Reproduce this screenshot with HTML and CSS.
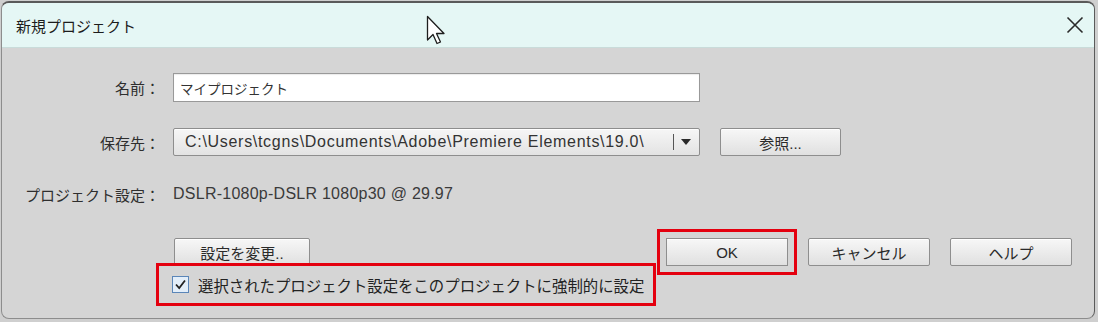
FILE: index.html
```html
<!DOCTYPE html>
<html lang="ja">
<head>
  <meta charset="UTF-8">
  <title>新規プロジェクト</title>
  <link rel="stylesheet" href="styles.css">
</head>
<body>
  <div class="window">
    <div class="titlebar">
      <span class="title">新規プロジェクト</span>
      <svg class="close-icon" width="18" height="18" viewBox="0 0 18 18">
        <path d="M1.5 1.5 L16.5 16.5 M16.5 1.5 L1.5 16.5" stroke="#2b2b2b" stroke-width="1.6" fill="none"/>
      </svg>
      <svg class="cursor" width="20" height="31" viewBox="0 0 20 31">
        <path d="M1.5 1.5 V25 L7 19.5 L11 28.5 L14.5 27 L10.5 18.5 H18 Z" fill="#fff" stroke="#1e1e1e" stroke-width="1.3" stroke-linejoin="round"/>
      </svg>
    </div>

    <div class="content">
      <div class="form-row row-name">
        <label class="field-label" for="name">名前：</label>
        <input class="text-input" id="name" type="text" value="マイプロジェクト">
      </div>

      <div class="form-row row-path">
        <label class="field-label">保存先：</label>
        <div class="path-group">
          <div class="path-select">
            <span class="path-text">C:\Users\tcgns\Documents\Adobe\Premiere Elements\19.0\</span>
            <span class="path-sep"></span>
            <span class="path-arrow"></span>
          </div>
          <button class="btn btn-browse" type="button">参照...</button>
        </div>
      </div>

      <div class="form-row row-setting">
        <span class="field-label">プロジェクト設定：</span>
        <span class="setting-value">DSLR-1080p-DSLR 1080p30 @ 29.97</span>
      </div>

      <div class="actions">
        <button class="btn btn-change" type="button">設定を変更..</button>
        <div class="dialog-buttons">
          <button class="btn btn-ok marked" type="button">OK</button>
          <button class="btn" type="button">キャンセル</button>
          <button class="btn" type="button">ヘルプ</button>
        </div>
      </div>

      <label class="force-row marked">
        <span class="checkbox">
          <svg width="13" height="13" viewBox="0 0 13 13">
            <path d="M2 6.5 L5.2 10 L11 2.5" stroke="#222" stroke-width="1.8" fill="none"/>
          </svg>
        </span>
        <span class="force-text">選択されたプロジェクト設定をこのプロジェクトに強制的に設定</span>
      </label>
    </div>
  </div>
</body>
</html>
```

FILE: styles.css
```css
body {
  margin: 0;
  background: #cfcfcf;
  font-family: "Liberation Sans", "Noto Sans CJK JP", sans-serif;
  color: #2a2a2a;
}

.window {
  box-sizing: border-box;
  width: 1094px;
  height: 318px;
  margin: 1px 0 0 1px;
  background: #d5d5d5;
  border: 1px solid #8d8d8d;
  border-top: 2px solid #5a5a5a;
  border-right-color: #5a5a5a;
  border-radius: 8px;
  overflow: hidden;
}

.titlebar {
  position: relative;
  box-sizing: border-box;
  height: 45px;
  display: flex;
  align-items: center;
  justify-content: space-between;
  padding: 0 10px 0 14px;
  background: #e5f7f5;
  border-bottom: 1px solid #c9dcda;
}

.title {
  font-size: 15px;
  color: #1c1c1c;
}

.cursor {
  position: absolute;
  left: 424px;
  top: 12px;
}

.content {
  padding-top: 25px;
}

.form-row {
  display: grid;
  grid-template-columns: 158px 1fr;
  column-gap: 13px;
  align-items: center;
  height: 28px;
}

.row-name { margin-bottom: 27px; }
.row-path { margin-bottom: 24px; }

.field-label {
  text-align: right;
  font-size: 15px;
  color: #2e2e2e;
}

.text-input {
  box-sizing: border-box;
  width: 527px;
  height: 29px;
  margin: 0;
  padding: 0 6px;
  border: 1px solid #999;
  background: #fff;
  font-family: "Liberation Sans", "Noto Sans CJK JP", sans-serif;
  font-size: 13.5px;
  color: #333;
  box-shadow: inset 0 1px 1px rgba(0, 0, 0, 0.08);
}

.path-group {
  display: flex;
  align-items: center;
  gap: 20px;
}

.path-select {
  box-sizing: border-box;
  width: 527px;
  height: 28px;
  display: flex;
  align-items: center;
  padding-left: 11px;
  border: 1px solid #8e8e8e;
  border-radius: 2px;
  background: linear-gradient(#f6f6f6, #e3e3e3);
  box-shadow: inset 0 1px 0 #fff;
}

.path-text {
  flex: 1;
  font-size: 16px;
  letter-spacing: 0.7px;
  color: #333;
  white-space: nowrap;
}

.path-sep {
  width: 1px;
  height: 16px;
  background: #555;
  margin-right: 7px;
}

.path-arrow {
  width: 0;
  height: 0;
  border-left: 5px solid transparent;
  border-right: 5px solid transparent;
  border-top: 6px solid #2a2a2a;
  margin-right: 8px;
}

.btn {
  box-sizing: border-box;
  width: 122px;
  height: 28px;
  padding: 0;
  border: 1px solid #8e8e8e;
  border-radius: 2px;
  background: linear-gradient(#f7f7f7, #e0e0e0);
  box-shadow: inset 0 1px 0 #fff;
  font-family: "Liberation Sans", "Noto Sans CJK JP", sans-serif;
  font-size: 15px;
  color: #2a2a2a;
}

.btn-browse { width: 121px; }

.setting-value {
  font-size: 16px;
  letter-spacing: 0.25px;
  color: #3a3a3a;
}

.actions {
  display: flex;
  align-items: center;
  margin-top: 30px;
  padding: 0 22px 0 172px;
}

.btn-change { width: 136px; }

.dialog-buttons {
  display: flex;
  gap: 20px;
  margin-left: auto;
}

.marked {
  outline: 3px solid #e4000f;
  outline-offset: 6px;
}

.btn-ok {
  border-radius: 0;
}

.force-row {
  box-sizing: border-box;
  display: inline-flex;
  align-items: center;
  gap: 9px;
  height: 27px;
  margin: 5px 0 0 162px;
  padding: 0 4px 0 8px;
}

.force-row.marked {
  outline-offset: 5px;
}

.checkbox {
  box-sizing: border-box;
  width: 17px;
  height: 17px;
  display: flex;
  align-items: center;
  justify-content: center;
  border: 1px solid #5b86b8;
  background: #e3eef9;
}

.force-text {
  font-size: 15.4px;
  color: #222;
  white-space: nowrap;
}
```
